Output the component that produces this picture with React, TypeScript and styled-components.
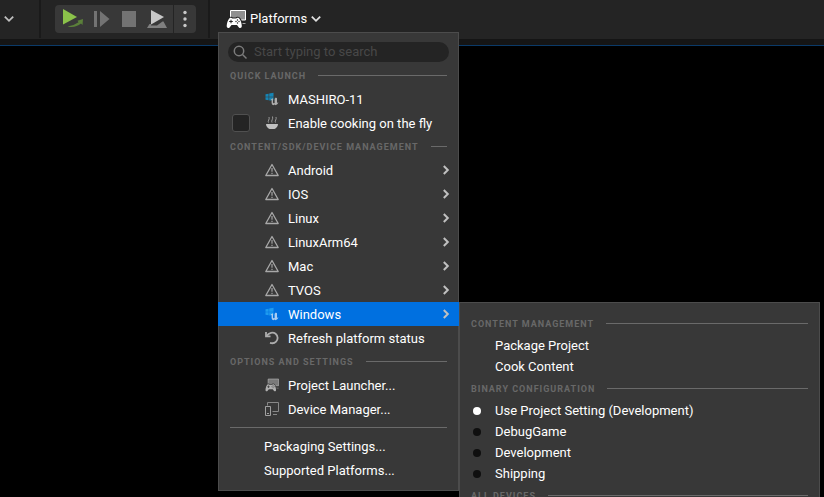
import React from "react";
import styled, { createGlobalStyle, css } from "styled-components";

const GlobalStyle = createGlobalStyle`
  *, *::before, *::after { box-sizing: border-box; }
  body {
    margin: 0;
    background: #000;
    color: #fff;
    font: 13px/16px Roboto, "Open Sans", sans-serif;
  }
  button, input { font: inherit; color: inherit; }
`;

const Screen = styled.main`
  position: relative;
  height: 100vh;
  overflow: hidden;
`;

const Toolbar = styled.header`
  display: flex;
  align-items: flex-start;
  height: 46px;
  background: linear-gradient(#242424 39px, #151515 39px);
  border-bottom: 1px solid #0b3a68;
`;

const Divider = styled.span<{ $after: number }>`
  width: 2px;
  height: 38px;
  margin-right: ${(p) => p.$after}px;
  background: #1a1a1a;
`;

const plainButton = css`
  display: flex;
  align-items: center;
  padding: 0;
  border: 0;
  background: none;
  text-align: left;
`;

const SaveOptions = styled.button`
  ${plainButton}
  width: 39px;
  height: 38px;
  padding-left: 4px;
`;

const PlayGroup = styled.div`
  display: flex;
  height: 28px;
  margin: 5px 12px 0 0;
  padding-left: 4px;
  border-radius: 4px;
  background: #383838;
`;

const ToolButton = styled.button<{ $wide?: boolean }>`
  ${plainButton}
  width: ${(p) => (p.$wide ? 30 : 28)}px;
`;

const MoreButton = styled.button`
  ${plainButton}
  justify-content: center;
  width: 23px;
  border-left: 1px solid #242424;
`;

const Platforms = styled.div`
  position: relative;
`;

const PlatformsButton = styled.button`
  ${plainButton}
  gap: 4px;
  height: 38px;
  padding-left: 8px;
`;

const Menu = styled.div`
  position: absolute;
  z-index: 1;
  top: 32px;
  left: 0;
  width: 241px;
  padding: 10px 0 9px;
  background: #383838;
  box-shadow: inset 0 0 0 1px #4c4c4c;
`;

const SubMenu = styled(Menu)`
  top: 0;
  left: 100%;
  width: 361px;
`;

const Search = styled.label`
  display: flex;
  align-items: center;
  gap: 6px;
  height: 20px;
  margin: 0 10px 2px;
  padding: 0 6px 0 5px;
  border-radius: 10px;
  background: #242424;
`;

const SearchInput = styled.input`
  flex: 1;
  min-width: 0;
  padding: 0;
  border: 0;
  outline: 0;
  background: none;
  &::placeholder { color: #484848; opacity: 1; }
`;

const SectionTitle = styled.h2`
  display: flex;
  align-items: center;
  gap: 12px;
  height: 23px;
  margin: 0 12px;
  color: #686868;
  font-size: 9px;
  font-weight: 700;
  line-height: 12px;
  letter-spacing: 1px;
  text-transform: uppercase;
  white-space: nowrap;
  &::after {
    content: "";
    flex: 1;
    height: 1px;
    background: #6a6a6a;
  }
`;

const Separator = styled.hr`
  height: 1px;
  margin: 6px 12px;
  border: 0;
  background: #6a6a6a;
`;

const Entry = styled.div`
  position: relative;
`;

const Row = styled.button<{ $active?: boolean; $plain?: boolean }>`
  ${plainButton}
  gap: 9px;
  width: 100%;
  height: 24px;
  padding: 0 9px 0 ${(p) => (p.$plain ? 46 : 47)}px;
  background: ${(p) => (p.$active ? "#0070e0" : "none")};
`;

const CheckRow = styled.label`
  display: flex;
  align-items: center;
  gap: 15px;
  height: 24px;
  padding-left: 14px;
`;

const CheckBox = styled.input`
  appearance: none;
  width: 18px;
  height: 18px;
  margin: 0;
  border: 1px solid #505050;
  border-radius: 3px;
  background: #242424;
`;

const CheckText = styled.span`
  display: flex;
  align-items: center;
  gap: 9px;
`;

const RowLabel = styled.span`
  flex: 1;
  padding-top: 2px;
`;

const SubRow = styled.button`
  ${plainButton}
  width: 100%;
  height: 21px;
  padding-left: 36px;
`;

const RadioRow = styled.label`
  display: flex;
  align-items: center;
  gap: 14px;
  height: 21px;
  padding-left: 14px;
`;

const Radio = styled.input`
  appearance: none;
  width: 8px;
  height: 8px;
  margin: 0;
  border-radius: 50%;
  background: #0f0f0f;
  &:checked { background: #fff; }
`;

const Icon = styled.svg`
  flex: none;
  display: block;
`;

const ChevronDown = ({ color = "#e0e0e0" }: { color?: string }) => (
  <Icon width="10" height="8" viewBox="0 0 10 8" fill="none" stroke={color} strokeWidth="1.8">
    <path d="M.8 1.6 5 5.8l4.2-4.2" />
  </Icon>
);

const ChevronRight = () => (
  <Icon width="8" height="10" viewBox="0 0 8 10" fill="none" stroke="#c0c0c0" strokeWidth="2">
    <path d="M1.8 1 5.8 5l-4 4" />
  </Icon>
);

const PlayIcon = () => (
  <Icon width="28" height="28">
    <path d="M4 4 18 12 4 19.5Z" fill="#8bc24a" />
    <path d="M8.500 21.500Q14.500 21 19.500 17.300L18.500 15.800 24 14l-.5 6-1.500-1.400Q16 23.500 8.500 21.500Z" fill="#5b803a" />
  </Icon>
);

const SkipIcon = () => (
  <Icon width="28" height="28" fill="#737373">
    <path d="M7 6h3v16H7zM13 6l9.500 8L13 22z" />
  </Icon>
);

const StopIcon = () => (
  <Icon width="28" height="28" fill="#737373">
    <path d="M7 6h14v16H7z" />
  </Icon>
);

const EjectIcon = () => (
  <Icon width="28" height="28">
    <path d="M4 23 6.500 19H8v1.500h6l5.500-4h1L24 23Z" fill="#808080" />
    <path d="M8 5 21 12 8 19.500Z" fill="#c8c8c8" />
  </Icon>
);

const DotsIcon = () => (
  <Icon width="4" height="18" fill="#c8c8c8">
    <circle cx="2" cy="2.500" r="1.700" />
    <circle cx="2" cy="9" r="1.700" />
    <circle cx="2" cy="15.500" r="1.700" />
  </Icon>
);

const GamepadScreen = ({ size, color, screen, back }: { size: number; color: string; screen: string; back: string }) => (
  <Icon width={size} height={size} viewBox="0 0 20 20">
    <path d="M4.500 1.500h15v9.500h-15z" fill={screen} stroke={color} />
    <path d="M15.500 14.500h4" stroke={color} opacity=".6" />
    <path
      d="M3.500 9.300c.9-.8 2.200-.5 2.800.2h3.900c.6-.7 1.900-1 2.800-.2 1.600 1.500 2.600 4.700 2.800 7.500.1 2.400-1.900 2.900-3.100 1.400l-1.700-2.300H5.500l-1.700 2.300C2.600 19.700.6 19.200.7 16.800c.2-2.800 1.200-6 2.800-7.500z"
      fill={color}
      stroke={back}
      strokeWidth="2"
      paintOrder="stroke"
    />
    <path d="M3.200 12.500h3.600M5 10.700v3.600" stroke={back} strokeWidth="1" />
    <circle cx="11.500" cy="11" r=".7" fill={back} />
    <circle cx="11.500" cy="14" r=".7" fill={back} />
    <circle cx="10" cy="12.500" r=".7" fill={back} />
    <circle cx="13" cy="12.500" r=".7" fill={back} />
  </Icon>
);

const SearchIcon = () => (
  <Icon width="15" height="15" fill="none" stroke="#7c7c7c" strokeWidth="1.500">
    <circle cx="6" cy="6" r="4.700" />
    <path d="m9.500 9.500 4 4" />
  </Icon>
);

const WindowsIcon = ({ active }: { active?: boolean }) => (
  <Icon width="14" height="14" viewBox="0 0 14 14">
    <path
      d="M.5 2.300 3.600 1.700V4.700H.5zM4.200 1.600 8.500.8V4.700H4.200zM.5 5.300H3.600V8.300L.5 7.700zM4.200 5.300H8.500V8.200L5.500 8.600 4.200 8.400z"
      fill={active ? "#1e9cf0" : "#1685b5"}
    />
    <path
      d="M5.600 7.400 8 6.200V10.500Q8.300 11.600 9.600 11V6.800L10.800 5.600 12 6.200V10.800L13.500 10.400Q12.500 12.600 10.600 13.200L9.700 12.400 8.400 13.300Q6.600 13 6.600 11V8z"
      fill={active ? "#a9cdf2" : "#adadad"}
    />
  </Icon>
);

const BowlIcon = () => (
  <Icon width="14" height="14" fill="none" stroke="#999">
    <path d="M3.500 6.500C2.300 4.800 5 3.600 4 1M7 6.500C5.800 4.800 8.500 3 7.500.5M10.500 6.500C9.300 4.800 12 3.600 11 1" />
    <path d="M1 8h12c0 2.500-1.700 4-3.500 5h-5C2.700 12 1 10.500 1 8z" fill="#c0c0c0" stroke="none" />
  </Icon>
);

const WarningIcon = () => (
  <Icon width="14" height="14" fill="none" stroke="#a8a8a8" strokeLinejoin="round">
    <path d="M7 1.500 13.200 12.500H.8z" strokeWidth="1.300" />
    <path d="M7 5v3.800M7 9.800v1.200" strokeWidth="1.500" stroke="#8d8d8d" />
  </Icon>
);

const RefreshIcon = () => (
  <Icon width="14" height="14" fill="none" stroke="#adadad" strokeWidth="1.800">
    <path d="M1 1v4.300h4.500" />
    <path d="M1.500 5C4 1.500 8 .8 10.600 2.800c2.600 2.200 2.600 5.800.5 7.800-1.500 1.500-3.800 2-6.100 1.200" />
  </Icon>
);

const DevicesIcon = () => (
  <Icon width="14" height="14" fill="none" stroke="#a0a0a0">
    <path d="M2.500 3.500v-3h11v9h-6M8 12.500h4" stroke="#888" />
    <path d="M.5 4.500h5v9h-5zM2 11.500h2" />
  </Icon>
);

type Target = { name: string; active?: boolean };

const targets: Target[] = [
  { name: "Android" },
  { name: "IOS" },
  { name: "Linux" },
  { name: "LinuxArm64" },
  { name: "Mac" },
  { name: "TVOS" },
  { name: "Windows", active: true },
];

const configurations = ["Use Project Setting (Development)", "DebugGame", "Development", "Shipping"];

const WindowsMenu = () => (
  <SubMenu>
    <SectionTitle>Content Management</SectionTitle>
    <SubRow>Package Project</SubRow>
    <SubRow>Cook Content</SubRow>
    <SectionTitle>Binary Configuration</SectionTitle>
    {configurations.map((name, i) => (
      <RadioRow key={name}>
        <Radio type="radio" name="configuration" defaultChecked={i === 0} />
        {name}
      </RadioRow>
    ))}
    <SectionTitle>All Devices</SectionTitle>
  </SubMenu>
);

const PlatformsMenu = () => (
  <Menu>
    <Search>
      <SearchIcon />
      <SearchInput type="text" aria-label="Search" placeholder="Start typing to search" />
    </Search>
    <SectionTitle>Quick Launch</SectionTitle>
    <Row>
      <WindowsIcon />
      <RowLabel>MASHIRO-11</RowLabel>
    </Row>
    <CheckRow>
      <CheckBox type="checkbox" />
      <CheckText>
        <BowlIcon />
        <RowLabel>Enable cooking on the fly</RowLabel>
      </CheckText>
    </CheckRow>
    <SectionTitle>Content/SDK/Device Management</SectionTitle>
    {targets.map(({ name, active }) => (
      <Entry key={name}>
        <Row $active={active} aria-expanded={!!active}>
          {active ? <WindowsIcon active /> : <WarningIcon />}
          <RowLabel>{name}</RowLabel>
          <ChevronRight />
        </Row>
        {active && <WindowsMenu />}
      </Entry>
    ))}
    <Row>
      <RefreshIcon />
      <RowLabel>Refresh platform status</RowLabel>
    </Row>
    <SectionTitle>Options and Settings</SectionTitle>
    <Row>
      <GamepadScreen size={14} color="#b0b0b0" screen="#7a7a7a" back="#383838" />
      <RowLabel>Project Launcher...</RowLabel>
    </Row>
    <Row>
      <DevicesIcon />
      <RowLabel>Device Manager...</RowLabel>
    </Row>
    <Separator />
    <Row $plain>
      <RowLabel>Packaging Settings...</RowLabel>
    </Row>
    <Row $plain>
      <RowLabel>Supported Platforms...</RowLabel>
    </Row>
  </Menu>
);

export default function App() {
  return (
    <Screen>
      <GlobalStyle />
      <Toolbar>
        <SaveOptions aria-label="Options">
          <ChevronDown color="#c0c0c0" />
        </SaveOptions>
        <Divider $after={14} />
        <PlayGroup>
          <ToolButton aria-label="Play"><PlayIcon /></ToolButton>
          <ToolButton aria-label="Skip frame"><SkipIcon /></ToolButton>
          <ToolButton aria-label="Stop"><StopIcon /></ToolButton>
          <ToolButton $wide aria-label="Eject"><EjectIcon /></ToolButton>
          <MoreButton aria-label="More"><DotsIcon /></MoreButton>
        </PlayGroup>
        <Divider $after={8} />
        <Platforms>
          <PlatformsButton aria-expanded="true">
            <GamepadScreen size={20} color="#fff" screen="#8f8f8f" back="#242424" />
            Platforms
            <ChevronDown />
          </PlatformsButton>
          <PlatformsMenu />
        </Platforms>
      </Toolbar>
    </Screen>
  );
}
